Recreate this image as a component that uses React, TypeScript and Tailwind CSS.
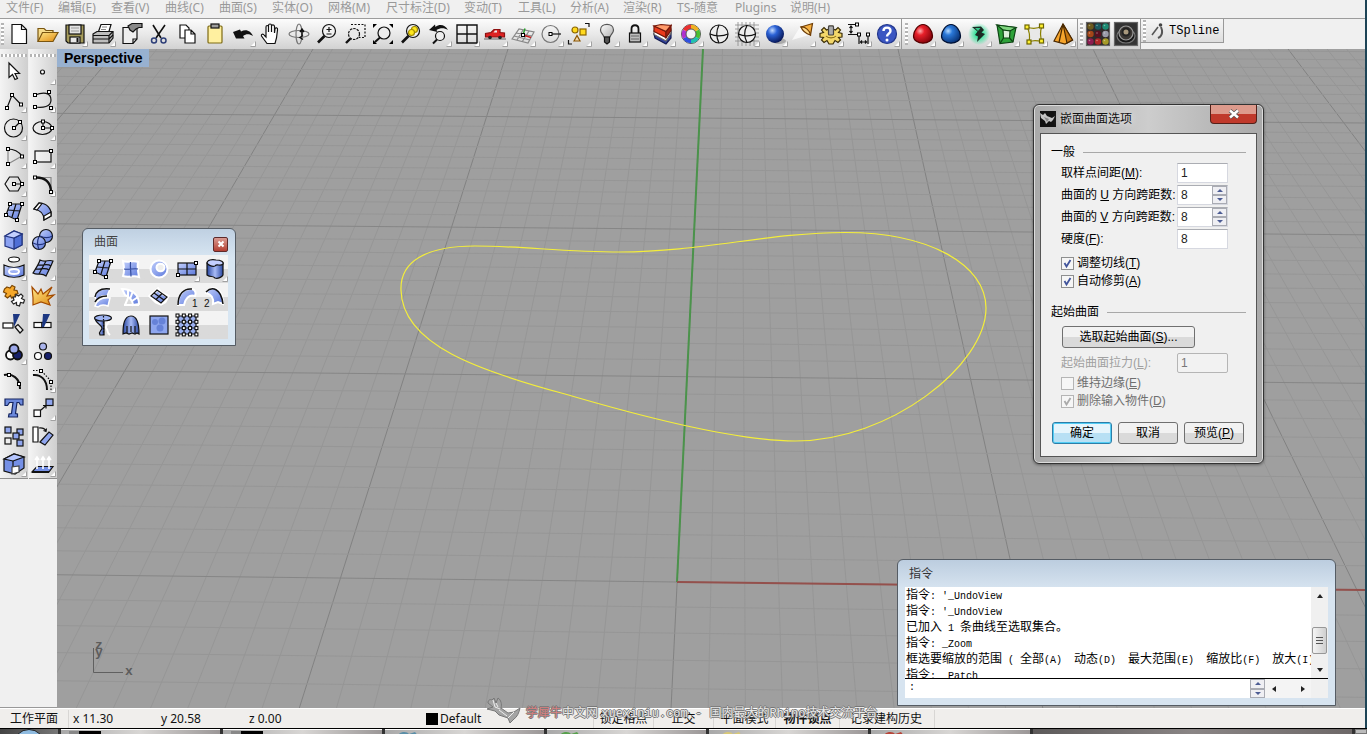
import React from "react";

const cjk = "font-['Liberation_Sans','Noto_Sans_CJK_SC',sans-serif]";

/* ---------- drawing helpers ---------- */

function Node({ x, y, f = "#fff" }: { x: number; y: number; f?: string }) {
  return <rect x={x - 1.5} y={y - 1.5} width="3" height="3" fill={f} stroke="#000" strokeWidth="1" />;
}

function Gradients() {
  return (
    <svg className="absolute h-0 w-0" aria-hidden="true">
      <defs>
        <linearGradient id="blue" x1="0" y1="0" x2="1" y2="1">
          <stop offset="0" stopColor="#c3d0fc" />
          <stop offset="1" stopColor="#5c79dc" />
        </linearGradient>
        <linearGradient id="deep" x1="0" y1="0" x2="1" y2="0">
          <stop offset="0" stopColor="#27459f" />
          <stop offset="0.5" stopColor="#a9bcf6" />
          <stop offset="1" stopColor="#27459f" />
        </linearGradient>
        <linearGradient id="gold" x1="0" y1="0" x2="1" y2="1">
          <stop offset="0" stopColor="#ffe88a" />
          <stop offset="1" stopColor="#e08a10" />
        </linearGradient>
        <linearGradient id="glass" x1="0" y1="0" x2="1" y2="1">
          <stop offset="0" stopColor="#ffffff" />
          <stop offset="1" stopColor="#b0b0b0" />
        </linearGradient>
        <radialGradient id="ballBlue" cx="0.35" cy="0.3" r="0.75">
          <stop offset="0" stopColor="#c5dcff" />
          <stop offset="0.35" stopColor="#2b62d6" />
          <stop offset="1" stopColor="#06124e" />
        </radialGradient>
        <radialGradient id="eggRed" cx="0.35" cy="0.35" r="0.75">
          <stop offset="0" stopColor="#ffb0b0" />
          <stop offset="0.3" stopColor="#e8202a" />
          <stop offset="1" stopColor="#7a0008" />
        </radialGradient>
        <radialGradient id="eggBlue" cx="0.35" cy="0.35" r="0.75">
          <stop offset="0" stopColor="#b8dcff" />
          <stop offset="0.3" stopColor="#2a78d8" />
          <stop offset="1" stopColor="#052a6a" />
        </radialGradient>
        <radialGradient id="glow">
          <stop offset="0.3" stopColor="#35e39a" />
          <stop offset="1" stopColor="#35e39a" stopOpacity="0" />
        </radialGradient>
      </defs>
    </svg>
  );
}

type Tool = { name: string; art: React.ReactNode; flag?: boolean };

function ToolButton({ tool, className = "h-7 w-7" }: { tool: Tool; className?: string }) {
  return (
    <button type="button" aria-label={tool.name} className={`flex shrink-0 items-center justify-center ${className}`}>
      <svg viewBox="0 0 28 28" className="h-7 w-7" fill="none" stroke="#111" strokeWidth="1.2">
        <g transform="translate(2 2)">{tool.art}</g>
        {tool.flag && <path d="M26.500 21.500V26.500H21.500Z" fill="#fff" stroke="none" />}
        {tool.flag && <path d="M21.500 26.500H26.500V21.500" stroke="#999" strokeWidth="0.9" />}
      </svg>
    </button>
  );
}

/* ---------- main toolbar drawings (24 × 24) ---------- */

const lens = (
  <>
    <circle cx="14" cy="9" r="6.500" fill="#f4f4f4" fillOpacity="0.7" />
    <path d="M9.500 14L3 20.500" strokeWidth="2.600" />
  </>
);

const standardTools: Tool[] = [
  { name: "New", art: <path d="M5 2.500H14.500L19.500 7.500V21.500H5ZM14.500 2.500V7.500H19.500" fill="#fff" /> },
  {
    name: "Open",
    art: (
      <>
        <path d="M3 19.500V6.500H9L11 8.500H18V11" fill="#f6dc8c" stroke="#7a5510" />
        <path d="M3 19.500L7.500 10.500H23L18 19.500Z" fill="url(#gold)" stroke="#7a5510" />
      </>
    ),
  },
  {
    name: "Save",
    flag: true,
    art: (
      <>
        <path d="M3 3H21V21H5L3 19Z" fill="#a49a5a" />
        <rect x="6" y="3" width="12" height="9" fill="#e4e4e4" />
        <path d="M8 6H16M8 9H16" stroke="#999" />
        <rect x="7" y="15" width="10" height="6" fill="#e8e8e8" />
        <path d="M14.500 16V20" strokeWidth="2" />
      </>
    ),
  },
  {
    name: "Print",
    flag: true,
    art: (
      <>
        <path d="M7 11L10 2.500H20L17.500 11" fill="#fff" />
        <path d="M2 12L6 9.500H22V16L18 21H2Z" fill="#bdbdbd" />
        <path d="M2 13.500H18M18 21V13.500L22 9.500M2 17H18M18 17L22 13" />
        <path d="M11 5H16M10 7.500H15" stroke="#888" />
      </>
    ),
  },
  {
    name: "Properties",
    art: (
      <>
        <path d="M4 5.500H18V17L14 21.500H4Z" fill="#eee" />
        <path d="M18 17H14V21.500" />
        <path d="M9 4L13 1.500H23V5.500H20L17 7L14 10L11 8Z" fill="#888" />
      </>
    ),
  },
  {
    name: "Cut",
    art: (
      <>
        <path d="M6 3L14 16M18 3L9 16" strokeWidth="1.600" />
        <circle cx="7" cy="18.500" r="2.500" stroke="#2e3f78" strokeWidth="1.500" />
        <circle cx="16.500" cy="18.500" r="2.500" stroke="#2e3f78" strokeWidth="1.500" />
      </>
    ),
  },
  {
    name: "Copy",
    art: (
      <>
        <path d="M5 3H11L14 6V16H5Z" fill="#fff" />
        <path d="M10 8H16L20 12V21H10ZM16 8V12H20" fill="#fff" />
      </>
    ),
  },
  {
    name: "Paste",
    art: (
      <>
        <rect x="5" y="4" width="14" height="17" rx="1" fill="#fff0a0" stroke="#7d6a13" />
        <rect x="8" y="2" width="8" height="4" fill="#9c9c9c" />
      </>
    ),
  },
  {
    name: "Undo",
    flag: true,
    art: <path d="M2 10L9 7.500L10 9.500C15 6.500 20 9 22 14C18 11.500 15 12 12 14L13.500 16.500L5 16.500Z" fill="#111" stroke="none" />,
  },
  {
    name: "Pan",
    art: (
      <path
        d="M8 21.500L2.500 14C2 12 4 11.500 5.500 13.500L7 15V5C7 3 9.500 3 9.500 5V10V3.500C9.500 1.500 12.500 1.500 12.500 3.500V10V4C12.500 2.500 15.500 2.500 15.500 4.500V11L16 7C16.500 5 19 5.500 18.500 8L17.500 16L16 21.500Z"
        fill="#fff"
      />
    ),
  },
  {
    name: "Rotate view",
    art: (
      <>
        <ellipse cx="12" cy="12" rx="10" ry="3.500" stroke="#777" />
        <ellipse cx="12" cy="12" rx="3" ry="10" stroke="#777" />
        <path d="M15 14V8M13 10L15 7L17 10M16 13.500L13 15.500L16 17.500" strokeWidth="1.500" />
      </>
    ),
  },
  {
    name: "Zoom dynamic",
    art: (
      <>
        {lens}
        <path d="M11.500 7.500H16.500M14 5V10M11.500 12H16.500" />
      </>
    ),
  },
  {
    name: "Zoom window",
    art: (
      <>
        <path d="M8 2.500H22V15.500H16" strokeDasharray="2 1.500" />
        <circle cx="11" cy="12" r="5.500" fill="#e8e8e8" strokeDasharray="2.500 1" />
        <path d="M7.500 16.500L3 21" strokeWidth="2.400" />
      </>
    ),
  },
  {
    name: "Zoom extents",
    art: (
      <>
        <circle cx="13" cy="11" r="6" fill="#eee" />
        <path d="M9 15.500L4 20" strokeWidth="2" />
        <path d="M2 6V2H6ZM18 2H22V6ZM2 18V22H6ZM18 22H22V18Z" fill="#000" stroke="none" />
      </>
    ),
  },
  {
    name: "Zoom selected",
    art: (
      <>
        {lens}
        <circle cx="15.500" cy="7.500" r="3" fill="#ffe81e" stroke="#a08a00" />
        <circle cx="12.500" cy="10.500" r="3" fill="#ffe81e" stroke="#a08a00" />
      </>
    ),
  },
  {
    name: "Undo view",
    flag: true,
    art: (
      <>
        <circle cx="13" cy="14" r="4.500" fill="#eee" />
        <path d="M10 17.500L6 21.500" strokeWidth="2" />
        <path d="M2 8L8 2.500L8.500 5C13 1.500 18 3 21 8C17 5.500 13 6 9.500 8L10.500 10Z" fill="#111" stroke="none" />
      </>
    ),
  },
  {
    name: "Four views",
    flag: true,
    art: <path d="M2 3H22V21H2ZM12 3V21M2 12H22" strokeWidth="1.400" />,
  },
  {
    name: "Named view",
    flag: true,
    art: (
      <>
        <path d="M1 17H23" stroke="#777" />
        <path d="M2.500 15V11.500L8 10.500L11 7.500H17V10.500L21.500 11V15Z" fill="#dd2222" stroke="#8d1010" />
        <path d="M10.500 10.500L12 8.500H14V10.500Z" fill="#eee" stroke="none" />
        <circle cx="7" cy="15.500" r="1.800" fill="#222" stroke="none" />
        <circle cx="17" cy="15.500" r="1.800" fill="#222" stroke="none" />
      </>
    ),
  },
  {
    name: "Construction plane",
    flag: true,
    art: (
      <>
        <path d="M1 17L8 7L23 10L17 21ZM3 14L19 18M5 11L21 14M6 18L12 8M11 20L18 9" stroke="#888" />
        <path d="M12 13L20 15.500" stroke="#cc2020" strokeWidth="1.500" />
        <path d="M12 13L14 6.500" stroke="#27a02a" strokeWidth="1.500" />
        <Node x={12} y={13} />
      </>
    ),
  },
  {
    name: "Object snap",
    flag: true,
    art: (
      <>
        <circle cx="11.500" cy="12" r="8.500" stroke="#777" />
        <path d="M12 12H22" />
        <Node x={11.5} y={12} />
      </>
    ),
  },
  {
    name: "Select",
    flag: true,
    art: (
      <>
        <circle cx="8" cy="8" r="3" fill="#ffd91e" stroke="#8a6500" />
        <rect x="13" y="7" width="6" height="6" fill="#ffd91e" stroke="#8a6500" />
        <path d="M7 19L10 13.500L13 19Z" fill="#f2d9b0" stroke="#8a5500" />
        <path d="M18 1.500H22V5M1.500 18V22H5" />
      </>
    ),
  },
  {
    name: "Hide",
    flag: true,
    art: (
      <>
        <path d="M9 15C8 12 5.500 11 5.500 8C5.500 0.500 18.500 0.500 18.500 8C18.500 11 16 12 15 15Z" fill="url(#glass)" stroke="#555" />
        <path d="M9.500 15H14.500V20L12 22L9.500 20Z" fill="#555" />
      </>
    ),
  },
  {
    name: "Lock",
    flag: true,
    art: (
      <>
        <path d="M8.500 11V7C8.500 2 15.500 2 15.500 7V11" strokeWidth="1.800" />
        <rect x="6.500" y="11" width="11" height="9" fill="#bdbdbd" />
        <path d="M8 14H16M8 17H16" stroke="#666" />
      </>
    ),
  },
  {
    name: "Layers",
    flag: true,
    art: (
      <>
        <path d="M3 12L15 18L20 10V16L15 22L4 16Z" fill="#2f3f9c" stroke="#141c50" />
        <path d="M3 9L15 15.500L20 8V11L15 19L3 12.500Z" fill="#fff" stroke="#666" />
        <path d="M3 4L15 9.500V15.500L3 9.500Z" fill="#ea3a1c" stroke="#74180a" />
        <path d="M15 9.500L20 3.500V8.500L15 15.500Z" fill="#a51f10" stroke="#74180a" />
        <path d="M3 4L10 2.500L20 3.500L15 9.500Z" fill="#ff9a6a" stroke="#74180a" />
      </>
    ),
  },
  {
    name: "Object colour",
    flag: true,
    art: (
      <g strokeWidth="4.500">
        <circle cx="12" cy="12" r="9.500" stroke="#555" strokeWidth="1" />
        <path d="M12 5A7 7 0 0 1 18 8.500" stroke="#f0b020" />
        <path d="M18 8.500A7 7 0 0 1 18 15.500" stroke="#4ac030" />
        <path d="M18 15.500A7 7 0 0 1 12 19" stroke="#20c0b0" />
        <path d="M12 19A7 7 0 0 1 6 15.500" stroke="#3050e0" />
        <path d="M6 15.500A7 7 0 0 1 6 8.500" stroke="#b030d0" />
        <path d="M6 8.500A7 7 0 0 1 12 5" stroke="#ea3030" />
        <circle cx="12" cy="12" r="5" stroke="#555" strokeWidth="1" fill="#f4f4f4" />
      </g>
    ),
  },
  {
    name: "Wireframe",
    art: (
      <>
        <circle cx="12" cy="12" r="9" fill="#eee" />
        <path d="M3 12C8 14.500 16 14.500 21 12M12 3C9 9 9 15 12 21" />
      </>
    ),
  },
  {
    name: "Shaded grid",
    flag: true,
    art: (
      <>
        <path d="M3 0V24M7 0V24M11 0V24M15 0V24M19 0V24M0 3H24M0 7H24M0 11H24M0 15H24M0 19H24" stroke="#888" strokeWidth="0.8" />
        <circle cx="12" cy="12" r="8.500" fill="#eee" />
        <path d="M3.500 12C8 14.500 16 14.500 20.500 12M12 3.500C9 9 9 15 12 20.500" />
      </>
    ),
  },
  {
    name: "Render",
    flag: true,
    art: (
      <>
        <ellipse cx="16" cy="19" rx="7" ry="3" fill="#888" stroke="none" opacity="0.6" />
        <circle cx="12" cy="12" r="9" fill="url(#ballBlue)" stroke="none" />
      </>
    ),
  },
  {
    name: "Spotlight",
    flag: true,
    art: (
      <>
        <path d="M1 18L9 5L18 13Z" fill="#fff" stroke="none" opacity="0.7" />
        <path d="M10 5L21.500 1.500L19.500 13Z" fill="#f6b040" stroke="#6e3c05" />
        <path d="M10 5C14 4.500 19 8.500 19.500 13C16 12 11.500 9 10 5Z" fill="#ffd98a" stroke="#6e3c05" />
      </>
    ),
  },
  {
    name: "Options",
    flag: true,
    art: (
      <>
        <path
          d="M10 4H14V7L16.500 8L19 5.500L21.500 8L19.500 10.500L23 11.500V15L19.500 15.500L21.500 18L19 20.500L16 18.500L14 22H10L8 18.500L5 20.500L2.500 18L4.500 15.500L1 15V11.500L4.500 10.500L2.500 8L5 5.500L7.500 8L10 7Z"
          fill="#f3d76a"
          stroke="#3b2d06"
        />
        <path d="M7 14C9 16.500 15 16.500 17 14" stroke="#8a6d14" />
        <rect x="9.500" y="4" width="5" height="9" rx="1" fill="#aaa" stroke="#444" />
      </>
    ),
  },
  {
    name: "Dimension",
    flag: true,
    art: (
      <>
        <path d="M1 2.500H10L10 3M1 12.500H12M4 5V10M2.500 6L4 4L5.500 6M2.500 9L4 11L5.500 9M12 14V22M21 14V22M13.500 20H19.500M15 18.500L13.500 20L15 21.500M18 18.500L19.500 20L18 21.500" />
        <Node x={10} y={2.5} />
        <Node x={12} y={12.5} />
        <Node x={21} y={12.5} />
      </>
    ),
  },
  {
    name: "Help",
    flag: true,
    art: (
      <>
        <circle cx="12" cy="12" r="9.500" fill="#3b56c2" stroke="#22368c" />
        <path d="M8.500 9C8.500 4.500 15.500 4.500 15.500 9C15.500 11.500 12 11.500 12 14.500" stroke="#fff" strokeWidth="2.400" />
        <circle cx="12" cy="18" r="1.500" fill="#fff" stroke="none" />
      </>
    ),
  },
];

const eggPath = "M12 2.500C17 2.500 21.500 9 21.500 14C21.500 23.500 2.500 23.500 2.500 14C2.500 9 7 2.500 12 2.500Z";

const tsplineTools: Tool[] = [
  { name: "Red surface", flag: true, art: <path d={eggPath} fill="url(#eggRed)" stroke="#500" /> },
  { name: "Blue surface", flag: true, art: <path d={eggPath} fill="url(#eggBlue)" stroke="#013" /> },
  {
    name: "Convert",
    flag: true,
    art: (
      <>
        <circle cx="12" cy="12" r="11" fill="url(#glow)" stroke="none" />
        <path d="M5 5L14 4.500L17 8L14.500 10.500L18 12L10 20L11 14.500L8 13L10.500 9.500Z" fill="#1c2a24" stroke="none" />
        <path d="M8 6H13.500L11 9Z" fill="#35c98a" stroke="none" />
      </>
    ),
  },
  {
    name: "Edit box",
    flag: true,
    art: (
      <>
        <path d="M2 3L21 5.500L18 20L5 21.500Z" fill="#2ea23a" stroke="#0d4413" />
        <path d="M2 3L21 5.500L15 9L8 8Z" fill="#7fd67f" stroke="#0d4413" />
        <path d="M8 8L15 9L14.500 16L8.500 16Z" fill="#dcefdc" stroke="#0d4413" />
        <path d="M18 20L14.500 16M5 21.500L8.500 16" stroke="#0d4413" />
      </>
    ),
  },
  {
    name: "Edit points",
    flag: true,
    art: (
      <>
        <path d="M4 5C9 7 14 7 19 4C17 9 17 14 19 20C14 18 10 18 6 20C7 15 7 10 4 5Z" fill="#e8e8e8" stroke="#8a8000" />
        <g fill="#fff130" stroke="#6d6500">
          <rect x="2" y="3" width="4" height="4" />
          <rect x="16.500" y="2" width="4" height="4" />
          <rect x="4" y="18" width="4" height="4" />
          <rect x="16.500" y="17" width="4" height="4" />
        </g>
      </>
    ),
  },
  {
    name: "Pyramid",
    flag: true,
    art: (
      <>
        <path d="M12 2L21.500 18L14 22L3 19Z" fill="#f6a52c" stroke="#4a2900" />
        <path d="M12 2L16 21L21.500 18Z" fill="#c9780f" stroke="#4a2900" />
        <path d="M12 2L8 20.500" stroke="#4a2900" />
      </>
    ),
  },
];

const ballColours = ["#6c5a1d", "#1c5a60", "#1d8a72", "#a54618", "#5a1020", "#9a9aa8", "#8d1c50", "#b02828", "#a59a28"];

const renderTools: Tool[] = [
  {
    name: "Materials",
    art: (
      <>
        <rect x="0.500" y="0.500" width="23" height="23" fill="#302a2a" stroke="#666" />
        {ballColours.map((c, i) => (
          <g key={c} stroke="none">
            <circle cx={4.5 + (i % 3) * 7.5} cy={4.5 + Math.floor(i / 3) * 7.5} r="3.200" fill={c} />
            <circle cx={3.5 + (i % 3) * 7.5} cy={3.5 + Math.floor(i / 3) * 7.5} r="0.8" fill="#fff" opacity="0.400" />
          </g>
        ))}
      </>
    ),
  },
  {
    name: "Render preview",
    art: (
      <>
        <rect x="0.500" y="0.500" width="23" height="23" fill="#333" stroke="#666" />
        <ellipse cx="12" cy="14" rx="9" ry="7" fill="#181818" stroke="#777" />
        <circle cx="12" cy="11" r="7" fill="#3c3834" stroke="#999" />
        <circle cx="12" cy="10" r="3.500" fill="#a8987c" stroke="#222" strokeWidth="2" />
      </>
    ),
  },
];

/* ---------- side toolbars ---------- */

const sideLeft: Tool[] = [
  { name: "Pointer", art: <path d="M8 4V18.500L11.500 15.500L14 20.500L16.500 19.500L14 14.500H18.500Z" fill="#fff" transform="translate(-1 -1)" /> },
  {
    name: "Polyline",
    flag: true,
    art: (
      <>
        <path d="M5 20L10 7L19 16.500" />
        <Node x={5} y={20} />
        <Node x={10} y={7} />
        <Node x={19} y={16.5} />
      </>
    ),
  },
  {
    name: "Circle",
    flag: true,
    art: (
      <>
        <circle cx="11.500" cy="12" r="9" />
        <path d="M12 12L18 6" />
        <Node x={12} y={12} />
        <Node x={18} y={6} />
      </>
    ),
  },
  {
    name: "Arc",
    flag: true,
    art: (
      <>
        <path d="M6 5C13 5 17 8 20 12" />
        <path d="M6 5V20L20 12" stroke="#888" />
        <Node x={6} y={5} />
        <Node x={6} y={20} />
        <Node x={20} y={12.5} />
      </>
    ),
  },
  {
    name: "Polygon",
    flag: true,
    art: (
      <>
        <path d="M3 12L7.500 5H16L20 12L16 19H7.500Z M12 12H20" />
        <Node x={12} y={12} />
        <Node x={20} y={12} />
      </>
    ),
  },
  {
    name: "Surface from points",
    flag: true,
    art: (
      <>
        <path d="M8 4L20 4L15 20L4 15Z" fill="url(#blue)" />
        <path d="M14 4L10 17M6 10L18 11" />
        <Node x={8} y={4} />
        <Node x={20} y={4} />
        <Node x={15} y={20} />
        <Node x={4} y={15} />
      </>
    ),
  },
  {
    name: "Box",
    flag: true,
    art: (
      <>
        <path d="M3 8L12 3L20 6V17L12 21L3 18Z" fill="#8ba2f2" stroke="#22347e" />
        <path d="M12 10L20 6V17L12 21Z" fill="#4f6fd6" stroke="#22347e" />
        <path d="M3 8L12 10L20 6L12 3Z" fill="#c4d0ff" stroke="#22347e" />
      </>
    ),
  },
  {
    name: "Project curve",
    flag: true,
    art: (
      <>
        <ellipse cx="12" cy="3.500" rx="5.500" ry="2.500" fill="#fff" />
        <path d="M2 9C8 12 16 12 22 9V19C16 22 8 22 2 19Z" fill="url(#blue)" />
        <ellipse cx="12" cy="15.500" rx="5" ry="2.500" fill="#9fb2f4" stroke="#fff" strokeWidth="2" />
      </>
    ),
  },
  {
    name: "Join",
    art: (
      <>
        <path
          d="M5 3L8 4L10 1.500L13 3L12 6L15 6.500L16 9.500L13 10.500L13 13L9.500 14L8.500 11.500L5.500 14L3 12L4.500 9.500L1.500 8L2.500 5Z"
          fill="#f6a82a"
          stroke="#7a4500"
        />
        <path
          d="M14 10.500L16.500 12L19 10L21 12L19.500 14.500L22.500 16L21.500 19L18.500 18.500L17.500 22L14.500 21L14.500 18.500L11.500 20L9.500 17.500L12 16L11 13L13.500 13Z"
          fill="#fff"
          stroke="#222"
        />
      </>
    ),
  },
  {
    name: "Trim",
    art: (
      <>
        <rect x="1" y="11" width="10" height="5" fill="#fff" />
        <path d="M11 2H18L12 15Z" fill="#1c3782" stroke="none" />
        <path d="M13 15L16 12.500L21 18L18 21Z" fill="#eee" />
      </>
    ),
  },
  {
    name: "Group",
    flag: true,
    art: (
      <g stroke="#111" strokeWidth="1.800">
        <circle cx="8.500" cy="15" r="4.500" fill="#fff" />
        <circle cx="15.500" cy="15" r="4.500" fill="#17206a" />
        <circle cx="12" cy="9" r="4.500" fill="#9ca8ea" />
      </g>
    ),
  },
  {
    name: "Edit points",
    art: (
      <>
        <path d="M2 7C10 5 18 10 18 21" strokeWidth="2" />
        <Node x={7} y={7} />
        <Node x={17} y={16} />
      </>
    ),
  },
  {
    name: "Text",
    art: (
      <path
        d="M3 3H21V9H18.500L17 6.500H15L13.500 17.500L15.500 18V21H6.500L7 18L9.500 17.500L11 6.500H7.500L5.500 9.500H3Z"
        fill="#6c89dc"
        stroke="#14245e"
      />
    ),
  },
  {
    name: "Block",
    art: (
      <g fill="#8fa5ee">
        <rect x="3" y="3" width="6" height="6" />
        <rect x="15" y="5" width="6" height="6" />
        <rect x="11" y="9" width="6" height="6" />
        <rect x="3" y="14" width="6" height="6" fill="#eee" />
        <rect x="15" y="16" width="6" height="6" />
      </g>
    ),
  },
  {
    name: "Cage",
    flag: true,
    art: (
      <>
        <path d="M2 7L12 2L22 5V16L13 22L2 19Z" fill="#7590e6" />
        <path d="M11 9L22 5L12 2L2 7Z" fill="#b6c6ff" />
        <path d="M11 9V21" />
        <path d="M10 22V15L17 14V20Z" fill="#fff" stroke="#444" />
      </>
    ),
  },
];

const sideRight: Tool[] = [
  { name: "Point", flag: true, art: <circle cx="11.500" cy="12" r="2" fill="#fff" /> },
  {
    name: "Curve",
    flag: true,
    art: (
      <>
        <path d="M4 7C12 4 20 4 20 12C20 19 12 20 4 19" />
        <Node x={4} y={7} />
        <Node x={18} y={4} />
        <Node x={4} y={19} />
        <Node x={20} y={20} />
      </>
    ),
  },
  {
    name: "Ellipse",
    flag: true,
    art: (
      <>
        <ellipse cx="11.500" cy="12" rx="9.500" ry="6.500" />
        <path d="M12 12V6M12 12H21" />
        <Node x={12} y={12} />
        <Node x={12} y={5.5} />
        <Node x={21} y={12} />
      </>
    ),
  },
  {
    name: "Rectangle",
    flag: true,
    art: (
      <>
        <rect x="4" y="7" width="16" height="11" fill="#fff" fillOpacity="0.400" />
        <Node x={4} y={18} />
        <Node x={20} y={7} />
      </>
    ),
  },
  {
    name: "Fillet",
    flag: true,
    art: (
      <>
        <path d="M4 5.500H20V20" stroke="#888" />
        <path d="M4 5.500C14 5 20 10 20 20" strokeWidth="2.400" />
        <Node x={4} y={5.500} />
        <Node x={20} y={20} />
      </>
    ),
  },
  {
    name: "Surface corner",
    flag: true,
    art: (
      <>
        <path d="M3 9L8 3C16 3 21 9 20 16L13 20C13 14 9 10 3 9Z" fill="url(#blue)" />
        <path d="M3 9L8 3L11 3.500L6 10Z M20 16L13 20V16L20 12Z" fill="#fff" />
      </>
    ),
  },
  {
    name: "Boolean union",
    flag: true,
    art: (
      <>
        <circle cx="15" cy="8" r="6.500" fill="url(#blue)" />
        <circle cx="8" cy="15" r="6.500" fill="url(#blue)" />
        <path d="M2 15C6 17 11 17 14.500 15M8 8.500C6 13 6 17 8 21.500M9 8C13 10 18 10 21.500 8" stroke="#22347e" />
      </>
    ),
  },
  {
    name: "Mesh",
    flag: true,
    art: (
      <>
        <path d="M2 17C5 12 8 8 9 4C14 7 18 3 22 5C20 10 18 14 15 20C10 16 7 20 2 17Z" fill="url(#blue)" />
        <path d="M4 13C9 14 14 11 18 14M7 9C12 10 16 7 20 10M8 18L15 5" />
      </>
    ),
  },
  {
    name: "Explode",
    art: <path d="M2 21V14L1 3L7 10L10 5L12 10L21 3L16 12L23 11L17 16L19 21L10 18Z" fill="url(#gold)" stroke="#a34b00" />,
  },
  {
    name: "Split",
    art: (
      <>
        <rect x="3" y="10.500" width="8" height="5" fill="#fff" />
        <rect x="11" y="10.500" width="9" height="5" fill="#fff" />
        <path d="M12 2H19L13 15H11Z" fill="#1c3782" stroke="none" />
      </>
    ),
  },
  {
    name: "Ungroup",
    art: (
      <>
        <circle cx="12" cy="6.500" r="3.500" fill="#aab4ec" />
        <circle cx="7" cy="16" r="3.500" fill="#fff" />
        <circle cx="17" cy="16" r="3.500" fill="#17206a" />
      </>
    ),
  },
  {
    name: "Control points",
    flag: true,
    art: (
      <>
        <path d="M2 2.500H10L20 13V22" strokeDasharray="1.500 1.500" />
        <path d="M2 7C10 6 16 12 16 22" strokeWidth="2" />
        <Node x={10} y={3} />
        <Node x={20} y={14} />
      </>
    ),
  },
  {
    name: "Scale",
    flag: true,
    art: (
      <>
        <rect x="3" y="14" width="6.500" height="6.500" fill="#fff" />
        <rect x="15" y="3" width="7" height="6.500" fill="#8fa5ee" />
        <path d="M10 14L15 9.500M12 9.500H15V12.500" />
      </>
    ),
  },
  {
    name: "Rotate",
    art: (
      <>
        <path d="M2 3H7V18H2Z" fill="#fff" />
        <path d="M9 18L18 8L22 11L14 21Z" fill="#8fa5ee" />
        <path d="M8 4C12 3.500 14 5 15 7M12.500 6.500L15 7.500L15.500 4.500" />
      </>
    ),
  },
  {
    name: "Normals",
    flag: true,
    art: (
      <>
        <path d="M1 20L6 14.500H22L18 20Z" fill="#7590e6" />
        <path d="M6 17V6M12 17V6M18 17V6M4 8L6 5L8 8M10 8L12 5L14 8M16 8L18 5L20 8" stroke="#fff" strokeWidth="1.600" />
        <path d="M1 20H18" strokeWidth="2" />
      </>
    ),
  },
];

/* ---------- surface palette ---------- */

const surfaceTools: Tool[] = [
  { name: "Corner points", art: sideLeft[5].art },
  {
    name: "Edge surface",
    art: (
      <>
        <path d="M4 4C9 6 14 3 19 5C18 10 19 15 20 20C14 18 10 21 4 19C6 14 5 9 4 4Z" fill="url(#blue)" stroke="#fff" strokeWidth="2" />
        <path d="M11.500 5C11 10 12 15 12 19.500M5 12C10 13 15 11 19 12" stroke="#334b9c" />
      </>
    ),
  },
  {
    name: "Planar surface",
    art: (
      <>
        <circle cx="12" cy="12" r="8.500" fill="url(#blue)" stroke="#fff" strokeWidth="2" />
        <ellipse cx="13.500" cy="10.500" rx="4" ry="3.800" fill="#eee" stroke="#fff" strokeWidth="2" />
      </>
    ),
  },
  {
    name: "Rectangular plane",
    flag: true,
    art: (
      <>
        <rect x="3" y="6" width="18" height="12" fill="url(#blue)" />
        <path d="M12 6V18M3 12H21" />
        <Node x={3} y={18} />
        <Node x={21} y={6} />
      </>
    ),
  },
  {
    name: "Extrude",
    flag: true,
    art: (
      <>
        <path d="M4 6V18C8 21 9 18 12 21C15 22 19 20 20 18V6Z" fill="url(#deep)" />
        <path d="M4 6C4 3 9 2 13 3C18 3 21 5 20 7C17 10 14 6 12 9C9 10 5 8 4 6Z" fill="#c4d0ff" />
      </>
    ),
  },
  {
    name: "Loft",
    art: (
      <>
        <path d="M4 12C5 6 10 3 19 4L16 11C11 10 8 12 6 16Z" fill="url(#blue)" stroke="#fff" strokeWidth="1.500" />
        <path d="M4 21C6 15 11 12 19 13L17 21C12 19 9 20 7 22Z" fill="url(#blue)" stroke="#fff" strokeWidth="1.500" />
        <path d="M4 12C5 6 10 3 19 4M4 17C6 13 11 11 16 11" strokeWidth="1.500" />
      </>
    ),
  },
  {
    name: "Curve network",
    art: (
      <>
        <path d="M3 4C12 4 20 9 20 19L14 20C14 15 9 11 6 10Z" fill="url(#blue)" stroke="#fff" strokeWidth="2" />
        <path d="M9 4L9 13M14 6L11 14M19 12L13 16M5 20H20M6 20L9 13" stroke="#fff" strokeWidth="2" />
      </>
    ),
  },
  {
    name: "Patch",
    art: (
      <>
        <path d="M3 11L11 4L14 8L21 11L18 17L14 19L9 17Z" fill="url(#blue)" stroke="#fff" strokeWidth="3" />
        <path d="M4 11L10 5L20 12L14 18ZM7 8L17 15M9 14.500L15 8.500" />
      </>
    ),
  },
  {
    name: "Sweep one rail",
    art: (
      <>
        <path d="M3 20C3 9 9 3 17 4C21 5 21 9 20 11C14 9 10 14 9 20Z" fill="url(#blue)" stroke="#fff" strokeWidth="2" />
        <path d="M3 20C3 9 9 3 17 4" strokeWidth="1.500" />
        <text x="17" y="22" fontSize="10" fill="#111" stroke="none" fontFamily="Liberation Sans">1</text>
      </>
    ),
  },
  {
    name: "Sweep two rails",
    art: (
      <>
        <path d="M3 8C6 3 11 2 14 4C19 7 20 13 20 19L15 17L10 19C11 13 8 9 3 8Z" fill="url(#blue)" stroke="#fff" strokeWidth="2" />
        <path d="M3 7C9 1 18 3 20 19" strokeWidth="1.500" />
        <text x="1" y="22" fontSize="10" fill="#111" stroke="none" fontFamily="Liberation Sans">2</text>
      </>
    ),
  },
  {
    name: "Revolve",
    art: (
      <>
        <path d="M4 5C4 10 11 12 11 15C11 18 7 18 9 22H13V5Z" fill="url(#deep)" />
        <path d="M20 5C19 10 14 11 15 15C18 18 15 19 19 22" stroke="#fff" strokeWidth="2" />
        <ellipse cx="12" cy="5" rx="8.500" ry="3" fill="#9fb4f2" />
        <path d="M12.500 3V22" strokeDasharray="1.500 1.500" />
      </>
    ),
  },
  {
    name: "Drape",
    art: (
      <>
        <path d="M4 21C4 12 5 3 12 3C19 3 20 12 20 21L18 20L16 21L13 20L10 21L7 20Z" fill="url(#deep)" />
        <path d="M8 13V20M12 13V19M16 13V20" />
      </>
    ),
  },
  {
    name: "Heightfield",
    art: (
      <>
        <rect x="3" y="3" width="18" height="18" fill="#8ea6ee" />
        <g fill="#3f5fc4" stroke="none" opacity="0.500">
          <circle cx="8" cy="9" r="3" />
          <circle cx="15" cy="8" r="3.500" />
          <circle cx="13" cy="15" r="3.500" />
        </g>
      </>
    ),
  },
  {
    name: "Point grid",
    art: (
      <>
        <path d="M3 3H21V21H3ZM3 9H21M3 15H21M9 3V21M15 3V21" fill="#9bb0f0" />
        {[0, 1, 2, 3].map((r) => [0, 1, 2, 3].map((c) => <Node key={`${r}${c}`} x={2.5 + c * 6.3} y={2.5 + r * 6.3} />))}
      </>
    ),
  },
];

/* ---------- viewport grid ---------- */

const verticals = Array.from({ length: 95 }, (_, i) => i - 47);
const horizontals = Array.from({ length: 46 }, (_, i) => i - 5);
const depth = (n: number) => 51 / (n + 51);
const rowY = (n: number, x: number) => -671 + 1253 * depth(n) + 0.0117 * depth(n) * (x - 677);

function Viewport() {
  return (
    <svg viewBox="57 49 1308 659" preserveAspectRatio="xMinYMin slice" className="block h-full w-full" role="img" aria-label="Perspective">
      <g strokeWidth="1">
        {verticals.map((k) => (
          <line key={k} x1={703 + 19.5 * k} y1="49" x2={671 + 37.2 * k} y2="709" stroke={k % 10 === 0 ? "#828282" : "#969696"} />
        ))}
        {horizontals.map((n) => (
          <line key={n} x1="57" y1={rowY(n, 57)} x2="1366" y2={rowY(n, 1366)} stroke={n % 10 === 0 ? "#868686" : "#969696"} />
        ))}
      </g>
      <path d="M677 582L703 49" stroke="#4b934b" strokeWidth="2" />
      <path d="M677 582L1366 590" stroke="#94504c" strokeWidth="2" />
      <path
        d="M401 290C400 262 425 246 475 246C520 246 565 252 620 252C700 252 770 232.500 845 232.500C930 232.500 986 265 986 308C986 365 890 441 795 441C740 441 650 419 565 394C480 371 402 345 401 290Z"
        fill="none"
        stroke="#f4ee3a"
        strokeWidth="1.200"
      />
      <path d="M93.500 648V672.500H123" fill="none" stroke="#606060" />
      <g fill="#5c5c5c" fontFamily="Liberation Mono" fontSize="13" fontWeight="bold">
        <text x="95" y="649">z</text>
        <text x="95" y="656">y</text>
        <text x="125" y="675">x</text>
      </g>
    </svg>
  );
}

/* ---------- chrome ---------- */

const menus = [
  ["文件(F)", "w-[52px]"],
  ["编辑(E)", "w-[53px]"],
  ["查看(V)", "w-[54px]"],
  ["曲线(C)", "w-[54px]"],
  ["曲面(S)", "w-[53px]"],
  ["实体(O)", "w-[56px]"],
  ["网格(M)", "w-[58px]"],
  ["尺寸标注(D)", "w-[78px]"],
  ["变动(T)", "w-[54px]"],
  ["工具(L)", "w-[52px]"],
  ["分析(A)", "w-[53px]"],
  ["渲染(R)", "w-[54px]"],
  ["TS-随意", "w-[58px]"],
  ["Plugins", "w-[55px]"],
  ["说明(H)", "w-[54px]"],
];

function Grip() {
  return <div className="mx-px h-[22px] w-[3px] shrink-0 bg-[repeating-linear-gradient(#b4b4b4_0_2px,#fff_2px_4px)]" />;
}

function SideColumn({ tools }: { tools: Tool[] }) {
  return (
    <div className="flex w-[28px] flex-col items-center border-b border-[#8f8f8f] bg-linear-to-r from-[#f4f4f4] via-[#e2e2e2] to-[#cfcfcf]">
      <div className="mt-[5px] mb-px h-[3px] w-[26px] bg-[repeating-linear-gradient(90deg,#b4b4b4_0_2px,#fff_2px_4px)]" />
      {tools.map((t) => (
        <ToolButton key={t.name} tool={t} />
      ))}
    </div>
  );
}

function SurfacePalette() {
  const rows = [surfaceTools.slice(0, 5), surfaceTools.slice(5, 10), surfaceTools.slice(10)];
  return (
    <section className="absolute top-[179px] left-[25px] w-[154px] rounded-t-md border border-[#555c64] bg-linear-to-b from-[#bfd0e2] to-[#d8e6f2] to-25% px-[7px] pb-[6px]">
      <header className="flex h-[26px] items-center justify-between pr-0 pl-1">
        <h2 className="text-xs text-[#444]">曲面</h2>
        <button type="button" aria-label="Close" className="mt-1 flex h-[15px] w-[15px] items-center justify-center rounded-xs border border-[#5d2a2a] bg-linear-to-b from-[#d99a92] to-[#b23d32]">
          <svg viewBox="0 0 8 8" className="h-2 w-2">
            <path d="M1.500 1.500L6.500 6.500M6.500 1.500L1.500 6.500" stroke="#fff" strokeWidth="2" />
          </svg>
        </button>
      </header>
      {rows.map((row, i) => (
        <div key={i} className="-ml-px flex h-7 bg-linear-to-b from-[#f3f3f3] from-50% to-[#dadada] to-50%">
          {row.map((t) => (
            <ToolButton key={t.name} tool={t} />
          ))}
        </div>
      ))}
    </section>
  );
}

function Group({ title }: { title: string }) {
  return (
    <div className="flex h-5 items-center gap-2 pr-[10px] pl-[10px]">
      <h3 className="text-xs">{title}</h3>
      <div className="h-px flex-1 bg-[#a8a8a8]" />
    </div>
  );
}

function Field({ id, label, value, spin, disabled }: { id: string; label: React.ReactNode; value: string; spin?: boolean; disabled?: boolean }) {
  return (
    <div className="flex h-[22px] items-center pl-5">
      <label htmlFor={id} className={`w-[116px] text-xs whitespace-nowrap ${disabled ? "text-[#a0a0a0]" : ""}`}>
        {label}
      </label>
      <div className={`flex h-5 w-[51px] border ${disabled ? "rounded-xs border-[#b5b5b5] bg-[#f2f2f2]" : "border-[#d6d8e0] border-t-[#abadb3] bg-white"}`}>
        <input id={id} defaultValue={value} disabled={disabled} className={`w-0 min-w-0 flex-1 bg-transparent pl-[3px] text-xs outline-none ${disabled ? "text-[#777]" : "text-[#222]"}`} />
        {spin && <Spinner label={id} />}
      </div>
    </div>
  );
}

function Spinner({ label }: { label: string }) {
  return (
    <div className="flex w-[15px] flex-col">
      {["M1 4L4 1L7 4Z", "M1 1L4 4L7 1Z"].map((d, i) => (
        <button key={d} type="button" aria-label={`${label} ${i ? "down" : "up"}`} className="flex flex-1 items-center justify-center border border-[#a9abb3] bg-[#efeff3]">
          <svg viewBox="0 0 8 5" className="h-[5px] w-2">
            <path d={d} fill="#4c5c94" />
          </svg>
        </button>
      ))}
    </div>
  );
}

function Check({ label, checked, disabled }: { label: React.ReactNode; checked?: boolean; disabled?: boolean }) {
  return (
    <label className={`flex h-[18px] items-center gap-[3px] pl-5 text-xs whitespace-nowrap ${disabled ? "text-[#6f6f6f]" : ""}`}>
      <span className="relative flex h-[13px] w-[13px]">
        <input type="checkbox" defaultChecked={checked} disabled={disabled} className={`h-[13px] w-[13px] appearance-none border bg-[#f6f6f6] ${disabled ? "border-[#b5b5b5]" : "border-[#8e8f8f]"}`} />
        {checked && (
          <svg viewBox="0 0 13 13" className="pointer-events-none absolute inset-0 h-[13px] w-[13px]" fill="none">
            <path d="M3.500 6L5.500 9.500L9.500 3" stroke={disabled ? "#aaa" : "#42559c"} strokeWidth="1.800" />
          </svg>
        )}
      </span>
      <span>{label}</span>
    </label>
  );
}

const btn = "flex h-[22px] items-center justify-center rounded-[3px] border text-xs whitespace-nowrap";
const plain = "border-[#707070] bg-linear-to-b from-[#f2f2f2] from-50% to-[#dadada] to-50%";

function PatchDialog() {
  return (
    <section className="absolute top-[55px] right-[101px] flex w-[231px] flex-col rounded-md border border-[#333] bg-linear-to-r from-[#a9a9a9] via-[#cdcdcd] to-[#a9a9a9] px-[6px] pb-[6px] shadow-[inset_0_0_0_1px_#dcdcdc,0_1px_3px_#0006]">
      <header className="flex h-7 items-start gap-1">
        <svg viewBox="0 0 16 16" className="mt-[6px] h-4 w-4">
          <rect width="16" height="16" fill="#111" />
          <path d="M0 2L3 4L5 2L7 5L12 7L15 5L13 9L11 11L9 10L6 13L5 10L1 7Z" fill="#c4c4c4" />
          <path d="M4 6L9 8L7 11Z" fill="#888" />
        </svg>
        <h2 className="mt-1 flex-1 text-xs leading-[20px] text-[#111] [text-shadow:0_0_8px_#fff]">嵌面曲面选项</h2>
        <button type="button" aria-label="Close" className="flex h-[19px] w-[47px] items-center justify-center rounded-b-sm border border-t-0 border-[#542019] bg-linear-to-b from-[#dd9a8c] from-50% to-[#c0392b] to-50%">
          <svg viewBox="0 0 12 10" className="h-[10px] w-3">
            <path d="M2 1.500L10 8.500M10 1.500L2 8.500" stroke="#555" strokeWidth="4" />
            <path d="M2 1.500L10 8.500M10 1.500L2 8.500" stroke="#fff" strokeWidth="2.500" />
          </svg>
        </button>
      </header>
      <form className="flex flex-col border border-[#555] bg-[#f0f0f0] pt-2 pb-3" onSubmit={(e) => e.preventDefault()}>
        <Group title="一般" />
        <Field id="spacing" value="1" label={<>取样点间距(<u>M</u>):</>} />
        <Field id="u-spans" value="8" spin label={<>曲面的 <u>U</u> 方向跨距数:</>} />
        <Field id="v-spans" value="8" spin label={<>曲面的 <u>V</u> 方向跨距数:</>} />
        <Field id="stiffness" value="8" label={<>硬度(<u>F</u>):</>} />
        <div className="mt-1 mb-3">
          <Check checked label={<>调整切线(<u>T</u>)</>} />
          <Check checked label={<>自动修剪(<u>A</u>)</>} />
        </div>
        <Group title="起始曲面" />
        <button type="button" className={`${btn} ${plain} mt-1 mb-1 ml-[21px] w-[133px]`}>
          选取起始曲面(<u>S</u>)...
        </button>
        <Field id="pull" value="1" disabled label={<>起始曲面拉力(<u>L</u>):</>} />
        <Check disabled label={<>维持边缘(<u>E</u>)</>} />
        <Check disabled checked label={<>删除输入物件(<u>D</u>)</>} />
        <div className="mt-3 flex gap-[6px] pl-[11px]">
          <button type="submit" className={`${btn} w-[60px] border-[#2c7ea8] bg-linear-to-b from-[#e6f5fc] from-50% to-[#b8e0f4] to-50% shadow-[inset_0_0_0_1px_#52cdf5]`}>确定</button>
          <button type="button" className={`${btn} ${plain} w-[60px]`}>取消</button>
          <button type="button" className={`${btn} ${plain} w-[60px]`}>预览(<u>P</u>)</button>
        </div>
      </form>
    </section>
  );
}

const history = [
  "指令: '_UndoView",
  "指令: '_UndoView",
  "已加入 1 条曲线至选取集合。",
  "指令: _Zoom",
  "框选要缩放的范围 ( 全部(A)  动态(D)  最大范围(E)  缩放比(F)  放大(I)",
  "指令: _Patch",
];

function Mixed({ text }: { text: string }) {
  return (
    <>
      {text.split(/([\x20-\x7e]+)/).map((part, i) => (
        <span key={i} className={i % 2 ? "font-['Liberation_Mono',monospace] text-[10px]" : ""}>
          {part}
        </span>
      ))}
    </>
  );
}

function Arrow({ d, label, className }: { d: string; label: string; className: string }) {
  return (
    <button type="button" aria-label={label} className={`flex items-center justify-center ${className}`}>
      <svg viewBox="0 0 8 8" className="h-2 w-2">
        <path d={d} fill="#222" />
      </svg>
    </button>
  );
}

function CommandWindow() {
  return (
    <section className="absolute right-[29px] bottom-[2px] w-[439px] rounded-t-md border border-[#555c64] bg-linear-to-b from-[#bccddf] to-[#d7e4f0] to-20% px-[7px] pb-[7px]">
      <h2 className="flex h-[27px] items-center pl-1 text-xs text-[#333]">指令</h2>
      <div className="flex h-[92px] border-b border-black bg-white">
        <div className="min-w-0 flex-1 overflow-hidden pl-px text-xs text-black">
          {history.map((line, i) => (
            <p key={i} className="h-4 leading-[17px] whitespace-pre">
              <Mixed text={line} />
            </p>
          ))}
        </div>
        <div className="flex w-[17px] flex-col items-center justify-between bg-[#f0f0f0]">
          <Arrow label="Scroll up" d="M1 6L4 2L7 6Z" className="h-[17px] w-full" />
          <div className="mt-4 flex h-[27px] w-[15px] flex-col items-center justify-center gap-[2px] rounded-xs border border-[#979797] bg-linear-to-r from-[#f5f5f5] to-[#cfcfcf]">
            <span className="h-px w-[7px] bg-[#555]" />
            <span className="h-px w-[7px] bg-[#555]" />
            <span className="h-px w-[7px] bg-[#555]" />
          </div>
          <Arrow label="Scroll down" d="M1 2L4 6L7 2Z" className="h-[17px] w-full" />
        </div>
      </div>
      <div className="flex h-[19px] bg-white">
        <label htmlFor="command" className="pl-1 font-['Liberation_Mono',monospace] text-[10px] leading-[18px]">:</label>
        <input id="command" className="min-w-0 flex-1 text-xs outline-none" />
        <Spinner label="History" />
        <Arrow label="Scroll left" d="M6 1L2 4L6 7Z" className="w-[17px] bg-[#f4f4f4]" />
        <div className="w-3 bg-[#f4f4f4]" />
        <Arrow label="Scroll right" d="M2 1L6 4L2 7Z" className="w-[17px] bg-[#f4f4f4]" />
        <div className="w-[17px] bg-[#f0f0f0]" />
      </div>
    </section>
  );
}

const cell = "flex items-center border-r border-[#d8d6d4] h-full";

function StatusBar() {
  return (
    <footer className="relative flex h-[20px] shrink-0 items-center border-t border-white bg-[#f0eeec] pt-px text-xs whitespace-nowrap text-[#111]">
      <span className={`${cell} w-[69px] pl-[10px]`}>工作平面</span>
      <span className="w-[88px] pl-1 font-['Noto_Sans',sans-serif]">x 11.30</span>
      <span className="w-[88px] pl-1 font-['Noto_Sans',sans-serif]">y 20.58</span>
      <span className="w-[181px] pl-1 font-['Noto_Sans',sans-serif]">z 0.00</span>
      <button type="button" className={`${cell} w-[168px] gap-[2px] font-['Noto_Sans',sans-serif]`}>
        <span className="h-3 w-3 bg-black" />
        Default
      </button>
      <button type="button" className={`${cell} w-[60px] justify-center`}>锁定格点</button>
      <button type="button" className={`${cell} w-[60px] justify-center`}>正交</button>
      <button type="button" className={`${cell} w-[62px] justify-center`}>平面模式</button>
      <button type="button" className={`${cell} w-[64px] justify-center font-bold`}>物件锁点</button>
      <button type="button" className={`${cell} w-[95px] pl-[10px]`}>记录建构历史</button>
      <div className="pointer-events-none absolute -top-3 left-[486px] flex items-center gap-1">
        <svg viewBox="0 0 36 28" className="h-7 w-9">
          <path d="M2 6C2 3 4 2 6 3L8 1L10 6L12 1C15 3 16 7 15 11L22 16L28 15L34 11C33 16 31 20 28 22L24 26L22 21L13 18L9 14L1 12L7 10Z" fill="#a4a4a4" stroke="#777" />
          <path d="M7 3L9 10L14 12M13 13L21 19M22 21L28 15M10 6L12 10" stroke="#eee" fill="none" />
        </svg>
        <p className="pt-1 text-xs text-[#e8e8e8] [text-shadow:1px_0_#777,-1px_0_#777,0_1px_#777,0_-1px_#777]">
          <span className="text-[#d88080]">学犀牛</span>中文网 <span className="font-['Liberation_Mono',monospace]">xuexiniu.com - </span>国内最大的<span className="font-['Liberation_Mono',monospace]">Rhino</span>技术交流平台
        </p>
      </div>
    </footer>
  );
}

const tasks = ["#000", "#000", "#5b8fa8", "#57a04c", "#d8c878", "#b84438"];

function TaskBar() {
  return (
    <nav className="flex h-[6px] shrink-0 gap-[3px] overflow-hidden border-t border-black bg-[#333]">
      <button type="button" aria-label="Start" className="flex w-[58px] items-start justify-center bg-linear-to-r from-[#444] to-[#777]">
        <span className="h-5 w-8 shrink-0 rounded-t-full border border-[#222] bg-[#8fbbe0]" />
      </button>
      {tasks.map((c, i) => (
        <button key={i} type="button" aria-label={`Window ${i + 1}`} className="flex w-[159px] border-t border-white bg-linear-to-r from-[#a8a8a8] via-[#d8d6d4] to-[#9b9797] pt-px pl-2">
          <svg viewBox="0 0 32 6" className="h-[6px] w-8">
            {i < 2 ? <path d="M0 0H10V6H0Z" fill="#888" /> : null}
            {i < 2 ? <path d="M10 0H32V6H10Z" fill={c} /> : <path d="M4 6C6 0 14 0 16 3L22 1L26 6Z" fill={c} />}
          </svg>
        </button>
      ))}
      <div className="flex-1 bg-linear-to-r from-[#5d5a5a] via-[#8a8585] to-[#6d6868]" />
      <div className="w-3 border border-[#777] bg-[#bbb]" />
    </nav>
  );
}

export default function App() {
  return (
    <div className={`flex h-screen flex-col overflow-hidden bg-[#f0f0f0] ${cjk}`}>
      <Gradients />
      <div className="flex min-h-0 flex-1 flex-col border-r-2 border-[#1d4456]">
        <nav className="flex h-[18px] shrink-0 items-start pl-[6px] font-['Noto_Sans','Noto_Sans_CJK_SC',sans-serif] text-xs leading-[16px] whitespace-nowrap text-[#999]">
          {menus.map(([label, width]) => (
            <button key={label} type="button" className={`${width} shrink-0 text-left`}>
              {label}
            </button>
          ))}
        </nav>
        <div className="flex h-[31px] shrink-0 items-start border-t border-[#9c9c9c]">
          <div className="flex h-full items-center border-r border-[#999] bg-linear-to-b from-[#fcfcfc] via-[#e9e9e9] to-[#d2d2d2]">
            <Grip />
            {standardTools.map((t) => (
              <ToolButton key={t.name} tool={t} />
            ))}
          </div>
          <div className="flex h-full items-center border-r border-[#999] bg-linear-to-b from-[#fcfcfc] via-[#e9e9e9] to-[#d2d2d2] pl-[2px]">
            <Grip />
            {tsplineTools.map((t) => (
              <ToolButton key={t.name} tool={t} />
            ))}
          </div>
          <div className="flex h-full items-center border-r border-[#999] bg-linear-to-b from-[#fcfcfc] via-[#e9e9e9] to-[#d2d2d2] pl-px">
            <Grip />
            {renderTools.map((t) => (
              <ToolButton key={t.name} tool={t} />
            ))}
          </div>
          <div className="flex h-6 items-center border-r border-b border-[#999] bg-linear-to-b from-[#f6f6f6] to-[#dedede] pl-px">
            <Grip />
            <button type="button" className="flex items-center gap-1 pr-1 pl-1 font-['Liberation_Mono',monospace] text-xs text-black">
              <svg viewBox="0 0 14 16" className="h-4 w-[14px]" fill="none" stroke="#555" strokeWidth="1.500">
                <path d="M1 12L7 4" />
                <path d="M10 4C12 9 11 13 7 15" strokeWidth="2" />
                <circle cx="9.500" cy="2" r="1.800" fill="#444" stroke="none" />
              </svg>
              TSpline
            </button>
          </div>
        </div>
        <div className="flex min-h-0 flex-1">
          <aside className="flex w-[57px] shrink-0 items-start gap-px border-b border-[#999]">
            <SideColumn tools={sideLeft} />
            <SideColumn tools={sideRight} />
          </aside>
          <main className="relative min-w-0 flex-1 overflow-hidden bg-[#9f9f9f]">
            <div className="absolute inset-0">
              <Viewport />
            </div>
            <h1 className="absolute top-0 left-0 h-[18px] w-[92px] bg-[#98b1d0] pl-[7px] text-sm leading-[18px] font-bold text-black">Perspective</h1>
            <SurfacePalette />
            <PatchDialog />
            <CommandWindow />
          </main>
        </div>
        <StatusBar />
      </div>
      <TaskBar />
    </div>
  );
}
